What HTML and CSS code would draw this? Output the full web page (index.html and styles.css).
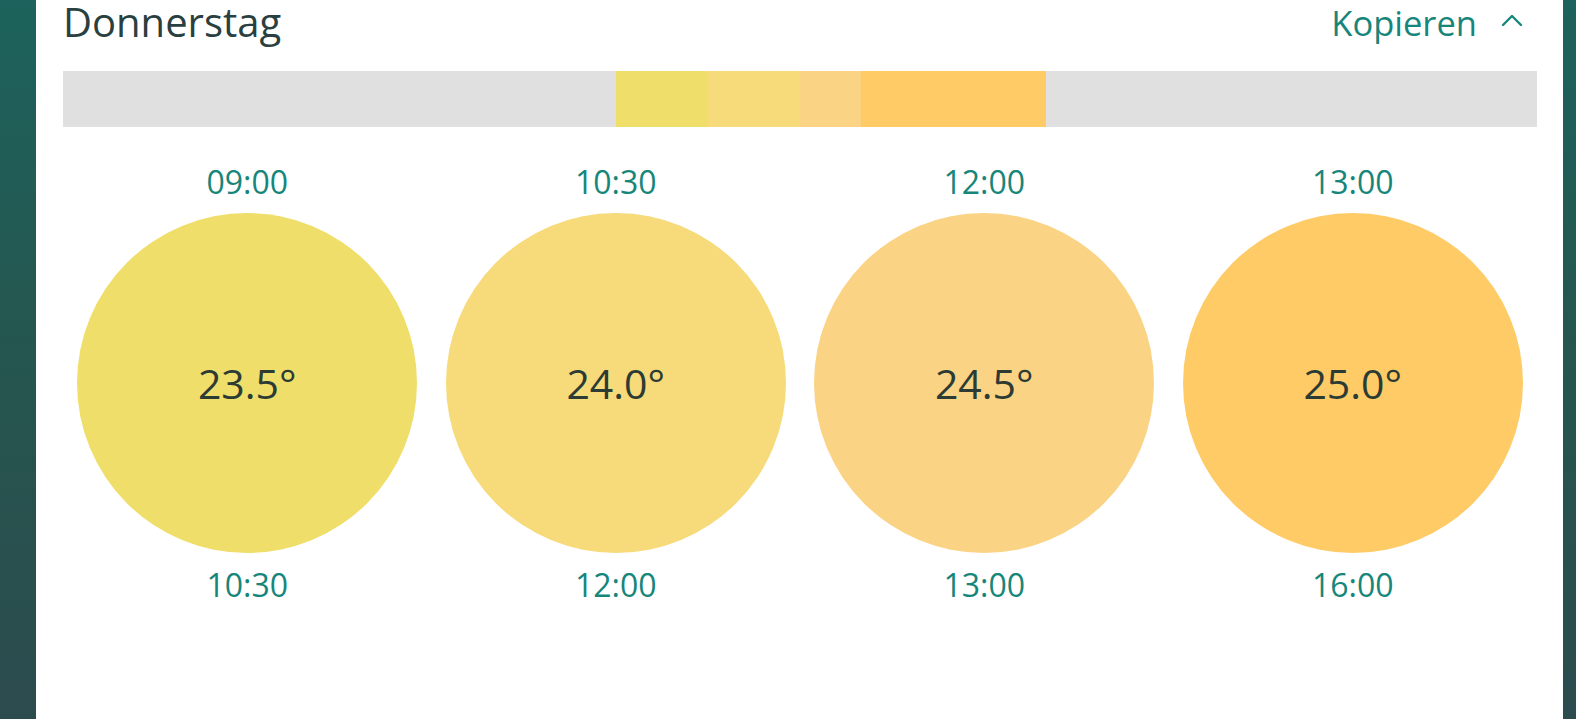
FILE: index.html
```html
<!DOCTYPE html>
<html lang="de">
<head>
<meta charset="utf-8">
<title>Donnerstag</title>
<link rel="stylesheet" href="styles.css">
</head>
<body>
<div class="page">
  <div class="strip strip-left"></div>
  <main class="card">
    <header class="head">
      <h1 class="title">Donnerstag</h1>
      <button class="copy">
        <span class="copy-label">Kopieren</span>
        <svg class="chev" width="24" height="16" viewBox="0 0 24 16" aria-hidden="true">
          <polyline points="3,13 12,4 21,13" fill="none" stroke="#17867a" stroke-width="2.4" stroke-linecap="round" stroke-linejoin="round"/>
        </svg>
      </button>
    </header>
    <div class="bar">
      <span class="seg" style="width:37.5%"></span>
      <span class="seg c1" style="width:6.25%"></span>
      <span class="seg c2" style="width:6.25%"></span>
      <span class="seg c3" style="width:4.1667%"></span>
      <span class="seg c4" style="width:12.5%"></span>
    </div>
    <div class="slots">
      <div class="slot">
        <div class="time">09:00</div>
        <div class="circle c1"><span class="temp">23.5°</span></div>
        <div class="time time-end">10:30</div>
      </div>
      <div class="slot">
        <div class="time">10:30</div>
        <div class="circle c2"><span class="temp">24.0°</span></div>
        <div class="time time-end">12:00</div>
      </div>
      <div class="slot">
        <div class="time">12:00</div>
        <div class="circle c3"><span class="temp">24.5°</span></div>
        <div class="time time-end">13:00</div>
      </div>
      <div class="slot">
        <div class="time">13:00</div>
        <div class="circle c4"><span class="temp">25.0°</span></div>
        <div class="time time-end">16:00</div>
      </div>
    </div>
  </main>
  <div class="strip strip-right"></div>
</div>
</body>
</html>
```

FILE: styles.css
```css
* { box-sizing: border-box; }

html, body {
  margin: 0;
  padding: 0;
  height: 100%;
  overflow: hidden;
  background: #ffffff;
  font-family: "Open Sans", "Noto Sans", sans-serif;
}

.page {
  display: flex;
  width: 100vw;
  height: 100vh;
}

.strip {
  flex: none;
  height: 100%;
  background: linear-gradient(to bottom, #1d625c 0%, #25564f 50%, #2c4b4e 100%);
}

.strip-left { width: 36px; }
.strip-right { width: 13px; }

.card {
  flex: 1;
  min-width: 0;
  background: #ffffff;
  padding: 0 26px 0 27px;
}

.head {
  display: flex;
  justify-content: space-between;
  align-items: flex-start;
  height: 44px;
}

.title {
  margin: 0;
  font-size: 40px;
  font-weight: 400;
  line-height: 44px;
  color: #2a3f40;
}

.copy {
  display: flex;
  align-items: center;
  gap: 23px;
  margin: 0 13px 0 0;
  padding: 1px 0 0 0;
  border: 0;
  background: none;
  font: inherit;
  cursor: pointer;
}

.copy-label {
  font-size: 34.5px;
  line-height: 44px;
  color: #17867a;
}

.chev {
  display: block;
  margin-top: -6px;
}

.bar {
  display: flex;
  margin-top: 26.5px;
  height: 56px;
  background: #e0e0e0;
}

.seg {
  display: block;
  height: 100%;
}

.c1 { background: #f0de6b; }
.c2 { background: #f7da7a; }
.c3 { background: #fad384; }
.c4 { background: #fecb67; }

.slots {
  display: grid;
  grid-template-columns: repeat(4, 1fr);
  margin-top: 35px;
}

.slot {
  display: flex;
  flex-direction: column;
  align-items: center;
}

.time {
  font-size: 32px;
  line-height: 40px;
  color: #17867a;
}

.circle {
  display: flex;
  align-items: center;
  justify-content: center;
  width: 340px;
  height: 340px;
  margin-top: 11px;
  border-radius: 50%;
}

.time-end {
  margin-top: 12.5px;
}

.temp {
  font-size: 41px;
  line-height: 1;
  color: #2c3b33;
  margin-top: 1px;
}
```
